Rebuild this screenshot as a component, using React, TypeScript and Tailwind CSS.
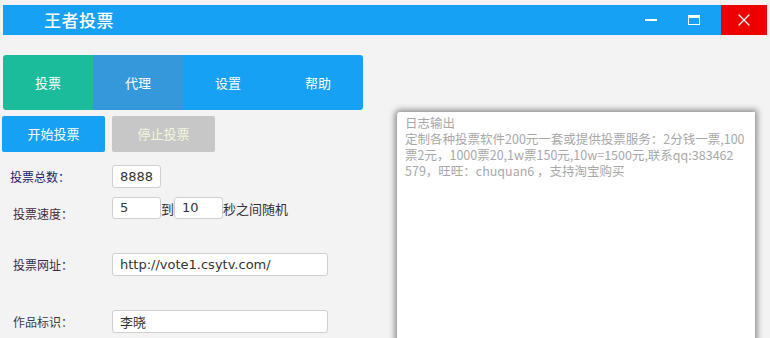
import { X } from "lucide-react"

const cjk = { fontFamily: '"Noto Sans CJK SC", "Noto Sans", sans-serif' }
const mono = { fontFamily: '"DejaVu Sans", sans-serif' }

const logLines = [
  "日志输出",
  "定制各种投票软件200元一套或提供投票服务：2分钱一票,100",
  "票2元，1000票20,1w票150元,10w=1500元,联系qq:383462",
  "579，旺旺：chuquan6 ，支持淘宝购买",
]

export default function App() {
  return (
    <div className="w-[770px] h-[338px] overflow-hidden bg-[#f3f3f3] pt-[5px]" style={cjk}>
      <div className="ml-[3px] mr-[3px] h-[30px] bg-[#16a1f5] flex items-center">
        <div className="ml-[41px] text-white text-[17px] font-medium tracking-[0.5px]">王者投票</div>
        <div className="ml-auto flex h-full items-center">
          <div className="w-[43px] flex justify-center"><div className="w-[12px] h-[2px] bg-white" /></div>
          <div className="w-[43px] flex justify-center"><div className="w-[12px] h-[10px] border border-white border-t-[3px]" /></div>
          <div className="w-[46px] h-full bg-[#ee0000] flex items-center justify-center ml-[6px]">
            <X className="text-white w-[20px] h-[20px]" strokeWidth={1.5} />
          </div>
        </div>
      </div>

      <div className="flex mt-[20px] ml-[3px] h-[55px]">
        <div className="w-[90px] rounded-l-[3px] bg-[#1abc9c] text-white text-[13px] flex items-center justify-center">投票</div>
        <div className="w-[90px] bg-[#3498db] text-white text-[13px] flex items-center justify-center">代理</div>
        <div className="w-[90px] bg-[#16a1f5] text-white text-[13px] flex items-center justify-center">设置</div>
        <div className="w-[90px] rounded-r-[3px] bg-[#16a1f5] text-white text-[13px] flex items-center justify-center">帮助</div>
      </div>

      <div className="flex">
        <div className="w-[390px]">
          <div className="flex gap-[7px] ml-[2px] mt-[6px]">
            <div className="w-[103px] h-[36px] rounded-[2px] bg-[#16a1f5] text-white text-[13px] flex items-center justify-center">开始投票</div>
            <div className="w-[103px] h-[36px] rounded-[2px] bg-[#c7c7c7] text-[#f5f5dc] text-[13px] flex items-center justify-center">停止投票</div>
          </div>

          <div className="mt-[13px] flex items-center h-[23px]">
            <div className="w-[112px] pl-[10px] text-[12px] text-[#1d1d70]">投票总数：</div>
            <div className="w-[49px] h-[23px] bg-white border border-[#cfcfcf] rounded-[3px] px-[7px] flex items-center text-[13px] text-[#333]" style={mono}>8888</div>
          </div>

          <div className="mt-[9px] flex items-start h-[23px]">
            <div className="w-[112px] pl-[13px] pt-[8px] text-[12px] text-[#4a2a3a]">投票速度：</div>
            <div className="w-[49px] h-[22px] bg-white border border-[#cfcfcf] rounded-[3px] px-[7px] flex items-center text-[13px] text-[#333]" style={mono}>5</div>
            <div className="text-[13px] text-[#333] pt-[2px] w-[13px]">到</div>
            <div className="w-[49px] h-[22px] bg-white border border-[#cfcfcf] rounded-[3px] px-[7px] flex items-center text-[13px] text-[#333]" style={mono}>10</div>
            <div className="text-[13px] text-[#333] pt-[2px]">秒之间随机</div>
          </div>

          <div className="mt-[33px] flex items-center h-[23px]">
            <div className="w-[112px] pl-[13px] text-[12px] text-[#3a2a4a]">投票网址：</div>
            <div className="w-[216px] h-[23px] bg-white border border-[#cfcfcf] rounded-[3px] px-[7px] flex items-center text-[13px] text-[#333]" style={mono}>http://vote1.csytv.com/</div>
          </div>

          <div className="mt-[34px] flex items-center h-[23px]">
            <div className="w-[112px] pl-[13px] text-[12px] text-[#3a3a4a]">作品标识：</div>
            <div className="w-[216px] h-[23px] bg-white border border-[#cfcfcf] rounded-[3px] px-[7px] flex items-center text-[13px] text-[#333]">李晓</div>
          </div>
        </div>

        <div className="ml-[7px] mt-[2px] w-[358px] h-[240px] bg-white rounded-tl-[3px] shadow-[0_0_6px_2px_rgba(0,0,0,0.45)] pl-[8px] pt-[3px] text-[12.5px] leading-[16px] text-[#a8a8a8] whitespace-nowrap">
          {logLines.map((line) => (
            <div key={line}>{line}</div>
          ))}
        </div>
      </div>
    </div>
  )
}
